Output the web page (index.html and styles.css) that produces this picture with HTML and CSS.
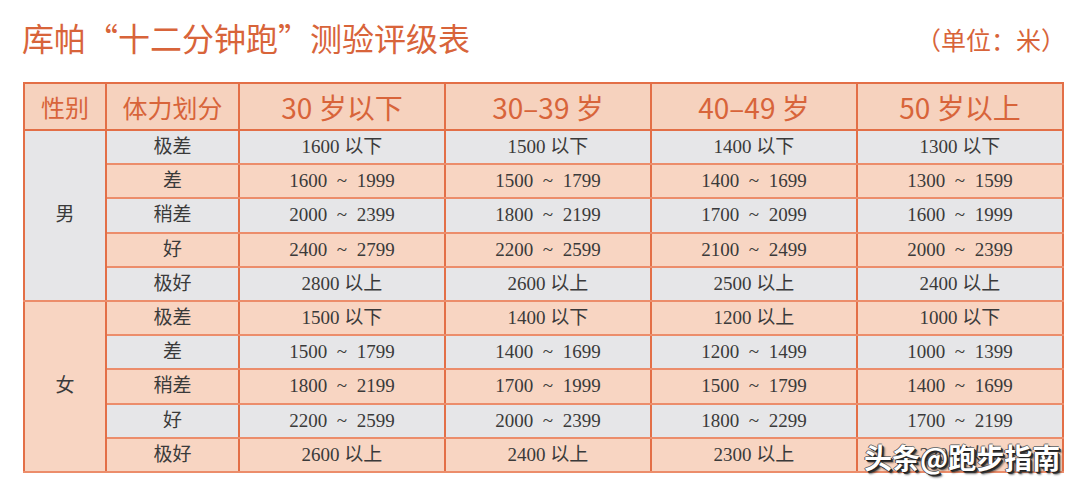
FILE: index.html
```html
<!DOCTYPE html>
<html lang="zh">
<head>
<meta charset="utf-8">
<link rel="stylesheet" href="styles.css">
</head>
<body>
<div class="page">
  <div class="titlebar">
    <h1 class="title">库帕“十二分钟跑”测验评级表</h1>
    <div class="unit">（单位：米）</div>
  </div>
  <table class="grid">
    <colgroup>
      <col class="c-sex"><col class="c-lvl"><col class="c-age"><col class="c-age"><col class="c-age"><col class="c-age">
    </colgroup>
    <thead>
      <tr>
        <th class="h-sm">性别</th>
        <th class="h-md">体力划分</th>
        <th>30 岁以下</th>
        <th>30–39 岁</th>
        <th>40–49 岁</th>
        <th>50 岁以上</th>
      </tr>
    </thead>
    <tbody>
      <tr class="g"><td rowspan="5" class="sex g">男</td><td>极差</td><td>1600 以下</td><td>1500 以下</td><td>1400 以下</td><td>1300 以下</td></tr>
      <tr class="p"><td>差</td><td>1600&nbsp; ~&nbsp; 1999</td><td>1500&nbsp; ~&nbsp; 1799</td><td>1400&nbsp; ~&nbsp; 1699</td><td>1300&nbsp; ~&nbsp; 1599</td></tr>
      <tr class="g"><td>稍差</td><td>2000&nbsp; ~&nbsp; 2399</td><td>1800&nbsp; ~&nbsp; 2199</td><td>1700&nbsp; ~&nbsp; 2099</td><td>1600&nbsp; ~&nbsp; 1999</td></tr>
      <tr class="p"><td>好</td><td>2400&nbsp; ~&nbsp; 2799</td><td>2200&nbsp; ~&nbsp; 2599</td><td>2100&nbsp; ~&nbsp; 2499</td><td>2000&nbsp; ~&nbsp; 2399</td></tr>
      <tr class="g"><td>极好</td><td>2800 以上</td><td>2600 以上</td><td>2500 以上</td><td>2400 以上</td></tr>
      <tr class="p"><td rowspan="5" class="sex p">女</td><td>极差</td><td>1500 以下</td><td>1400 以下</td><td>1200 以上</td><td>1000 以下</td></tr>
      <tr class="g"><td>差</td><td>1500&nbsp; ~&nbsp; 1799</td><td>1400&nbsp; ~&nbsp; 1699</td><td>1200&nbsp; ~&nbsp; 1499</td><td>1000&nbsp; ~&nbsp; 1399</td></tr>
      <tr class="p"><td>稍差</td><td>1800&nbsp; ~&nbsp; 2199</td><td>1700&nbsp; ~&nbsp; 1999</td><td>1500&nbsp; ~&nbsp; 1799</td><td>1400&nbsp; ~&nbsp; 1699</td></tr>
      <tr class="g"><td>好</td><td>2200&nbsp; ~&nbsp; 2599</td><td>2000&nbsp; ~&nbsp; 2399</td><td>1800&nbsp; ~&nbsp; 2299</td><td>1700&nbsp; ~&nbsp; 2199</td></tr>
      <tr class="p"><td>极好</td><td>2600 以上</td><td>2400 以上</td><td>2300 以上</td><td>2200 以上</td></tr>
    </tbody>
  </table>
  <div class="watermark">头条@跑步指南</div>
</div>
</body>
</html>
```

FILE: styles.css
```css
html, body {
  margin: 0;
  padding: 0;
  background: #ffffff;
}
.page {
  position: relative;
  width: 1080px;
  height: 488px;
  overflow: hidden;
  font-family: "Noto Sans CJK SC", "Noto Sans", sans-serif;
}
.titlebar {
  display: flex;
  justify-content: space-between;
  align-items: center;
  padding: 15px 22px 0 22px;
  height: 44px;
}
.title {
  margin: 0;
  font-size: 32px;
  font-weight: 400;
  line-height: 44px;
  color: #d8643a;
}
.unit {
  font-size: 25px;
  color: #d8643a;
  line-height: 36px;
  margin-top: 4px;
  margin-right: -8px;
}
.grid {
  margin: 23px 0 0 23px;
  border-collapse: collapse;
  table-layout: fixed;
  width: 1038px;
  border: 2px solid #e36f47;
}
.c-sex { width: 82px; }
.c-lvl { width: 133px; }
.c-age { width: 206px; }
.grid th {
  height: 45px;
  padding: 0;
  background: #f6d2be;
  color: #d8643a;
  font-weight: 400;
  font-size: 28px;
  border: 2px solid #e36f47;
  text-align: center;
  font-family: "Noto Sans CJK SC", "Noto Sans", sans-serif;
}
.grid th.h-sm { font-size: 24px; }
.grid th.h-md { font-size: 25px; }
.grid td {
  height: 32.2px;
  padding: 0;
  text-align: center;
  color: #3a3a3a;
  font-size: 19px;
  font-family: "Liberation Serif", "Noto Sans CJK SC", serif;
  border-left: 2px solid #e36f47;
  border-right: 2px solid #e36f47;
  border-top: 2px solid #ec8d6b;
  border-bottom: 2px solid #ec8d6b;
  line-height: 30px;
}
.grid tr.g td { background: #e6e6e8; }
.grid tr.p td { background: #f8d5c2; }
.grid td.sex.g { background: #e6e6e8; }
.grid td.sex.p { background: #f8d5c2; }
.grid tbody tr:nth-child(6) td {
  border-top: 2px solid #e36f47;
}
.grid td.sex {
  border-top: 2px solid #e36f47;
}
.watermark {
  position: absolute;
  left: 864px;
  top: 438px;
  font-size: 28px;
  line-height: 38px;
  color: #ffffff;
  font-weight: 700;
  text-shadow: 1px 1px 0 #222, 2px 2px 0 #333, 3px 3px 2px rgba(0,0,0,0.5), -1px 0 0 #555, 0 -1px 0 #777;
}
```
